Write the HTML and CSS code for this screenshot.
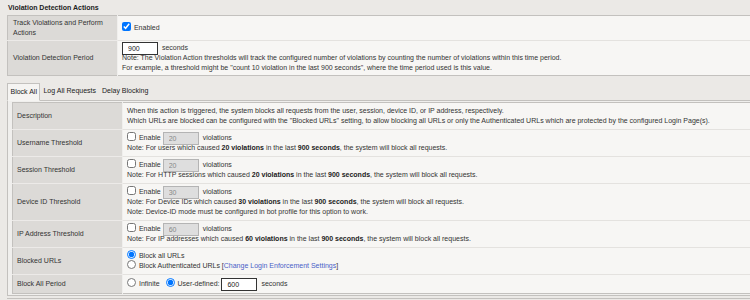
FILE: index.html
```html
<!DOCTYPE html>
<html lang="en">

<head>
    <meta charset="UTF-8">
    <meta name="viewport" content="width=device-width, initial-scale=1.0">
    <title>Violation Detection Actions</title>
    <link rel="stylesheet" href="styles.css">
</head>

<body>
    <div class="page">
        <h3 class="title">Violation Detection Actions</h3>

        <table class="settings top">
            <colgroup>
                <col class="label-col">
                <col>
            </colgroup>
            <tr>
                <th>Track Violations and Perform Actions</th>
                <td><label><input type="checkbox" class="check" checked> Enabled</label></td>
            </tr>
            <tr>
                <th>Violation Detection Period</th>
                <td>
                    <input type="text" class="num" value="900"> seconds
                    <br>Note: The Violation Action thresholds will track the configured number of violations by counting the number of violations within this time period.
                    <br>For example, a threshold might be "count 10 violation in the last 900 seconds", where the time period used is this value.
                </td>
            </tr>
        </table>

        <div class="tabs">
            <span class="tab active">Block All</span>
            <span class="tab">Log All Requests</span>
            <span class="tab">Delay Blocking</span>
        </div>

        <div class="panel">
            <table class="settings">
                <colgroup>
                    <col class="label-col">
                    <col>
                </colgroup>
                <tr>
                    <th>Description</th>
                    <td>When this action is triggered, the system blocks all requests from the user, session, device ID, or IP address, respectively.
                        <br>Which URLs are blocked can be configured with the "Blocked URLs" setting, to allow blocking all URLs or only the Authenticated URLs which are protected by the configured Login Page(s).
                    </td>
                </tr>
                <tr>
                    <th>Username Threshold</th>
                    <td>
                        <label><input type="checkbox" class="check"> Enable</label>
                        <input type="text" class="num" value="20" disabled> violations
                        <br>Note: For users which caused <b>20 violations</b> in the last <b>900 seconds</b>, the system will block all requests.
                    </td>
                </tr>
                <tr>
                    <th>Session Threshold</th>
                    <td>
                        <label><input type="checkbox" class="check"> Enable</label>
                        <input type="text" class="num" value="20" disabled> violations
                        <br>Note: For HTTP sessions which caused <b>20 violations</b> in the last <b>900 seconds</b>, the system will block all requests.
                    </td>
                </tr>
                <tr>
                    <th>Device ID Threshold</th>
                    <td>
                        <label><input type="checkbox" class="check"> Enable</label>
                        <input type="text" class="num" value="30" disabled> violations
                        <br>Note: For Device IDs which caused <b>30 violations</b> in the last <b>900 seconds</b>, the system will block all requests.
                        <br>Note: Device-ID mode must be configured in bot profile for this option to work.
                    </td>
                </tr>
                <tr>
                    <th>IP Address Threshold</th>
                    <td>
                        <label><input type="checkbox" class="check"> Enable</label>
                        <input type="text" class="num" value="60" disabled> violations
                        <br>Note: For IP addresses which caused <b>60 violations</b> in the last <b>900 seconds</b>, the system will block all requests.
                    </td>
                </tr>
                <tr>
                    <th>Blocked URLs</th>
                    <td>
                        <label><input type="radio" class="radio" name="urls" checked> Block all URLs</label>
                        <br><label><input type="radio" class="radio" name="urls"> Block Authenticated URLs</label>
                        [<a href="#" class="link">Change Login Enforcement Settings</a>]
                    </td>
                </tr>
                <tr class="single">
                    <th>Block All Period</th>
                    <td>
                        <label><input type="radio" class="radio" name="period"> Infinite</label>
                        <label class="spaced"><input type="radio" class="radio" name="period" checked> User-defined:</label>
                        <input type="text" class="num" value="600"> seconds
                    </td>
                </tr>
            </table>
        </div>

        <div class="footer">
            <button class="btn small">Save</button>
            <button class="btn wide">Cancel Changes</button>
        </div>
    </div>
</body>

</html>
```

FILE: styles.css
```css
html,
body {
    margin: 0;
    padding: 0;
    overflow: hidden;
}

body {
    background-color: #ebe9e6;
    font-family: "Liberation Sans", Arial, sans-serif;
    font-size: 7px;
    line-height: 10px;
    color: #333;
}

.page {
    padding-left: 7px;
}

.title {
    margin: 3px 0 2px 1px;
    font-size: 7px;
    line-height: 10px;
    font-weight: bold;
    color: #222;
}

.settings {
    width: calc(100% + 4px);
    border-collapse: collapse;
    table-layout: fixed;
    border: 1px solid #c3c1be;
}

.label-col {
    width: 110px;
}

.settings th {
    text-align: left;
    font-weight: normal;
    vertical-align: middle;
    padding: 3px 4px;
    background-color: #dcdad7;
    border-bottom: 1px solid #eceae8;
    border-right: 1px solid #f0efed;
}

.settings td {
    vertical-align: middle;
    padding: 3px 4px;
    background-color: #f7f6f4;
    border-bottom: 1px solid #e4e2df;
    white-space: nowrap;
}

.top th {
    padding: 2px 5px;
}

.top td {
    padding: 2px 4px;
}

.settings .single td {
    padding: 4px 4px;
}

.settings tr:last-child th,
.settings tr:last-child td {
    border-bottom: none;
}

.settings b {
    color: #222;
}

.check,
.radio {
    width: 9px;
    height: 9px;
    margin: -2px 1px -2px 0;
    vertical-align: -1px;
}

.num {
    box-sizing: border-box;
    width: 36px;
    height: 13px;
    margin: -2px 2px -2px 0;
    padding: 0 5px;
    font-family: "Liberation Sans", Arial, sans-serif;
    font-size: 7px;
    color: #222;
    border: 1px solid #333;
    background-color: #fff;
    vertical-align: middle;
}

.num:disabled {
    border-color: #b4b4b4;
    background-color: #dedede;
    color: #888;
}

.link {
    color: #4a5fc8;
    text-decoration: none;
}

.spaced {
    margin-left: 4px;
}

.tabs {
    display: flex;
    margin-top: 7px;
    position: relative;
    z-index: 1;
}

.tab {
    padding: 3px 2.5px;
    color: #222;
}

.tab + .tab {
    padding: 3px 3px;
}

.tab.active {
    background-color: #f5f4f2;
    border: 1px solid #c3c1be;
    border-bottom: 1px solid #f5f4f2;
}

.panel {
    margin-top: -1px;
    padding: 1px 0 1px 4px;
    border: 1px solid #c3c1be;
    border-right: none;
    background-color: #f0efed;
    overflow: hidden;
}

.footer {
    margin-top: 2px;
    padding-top: 2px;
    border-top: 1px solid #c3c1be;
    display: flex;
    gap: 2px;
}

.btn {
    height: 20px;
    padding: 0;
    font-family: "Liberation Sans", Arial, sans-serif;
    font-size: 7px;
    border: 1px solid #999;
    background-color: #f4f4f4;
}

.small {
    width: 25px;
}

.wide {
    width: 61px;
}
```
